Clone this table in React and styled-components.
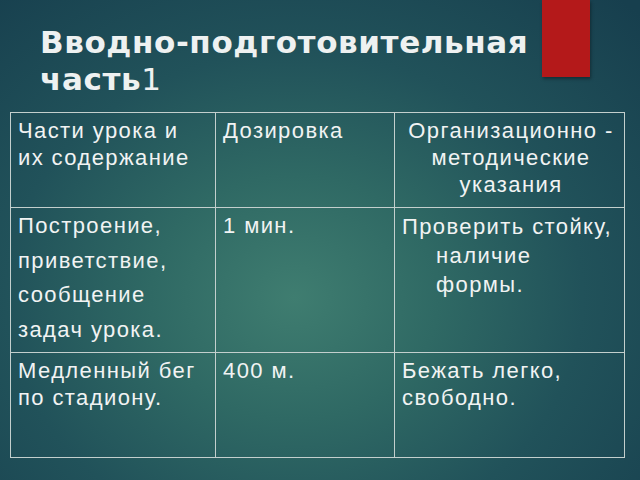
import React from "react";
import styled, { createGlobalStyle } from "styled-components";

const GlobalStyle = createGlobalStyle`
  html, body {
    margin: 0;
    padding: 0;
  }
  body {
    width: 640px;
    height: 480px;
    overflow: hidden;
  }
`;

const Slide = styled.div`
  width: 640px;
  height: 480px;
  box-sizing: border-box;
  background: radial-gradient(
    ellipse 75% 85% at 46% 62%,
    #3f7d70 0%,
    #2f6964 30%,
    #21525a 60%,
    #173f4e 100%
  );
  display: flex;
  flex-direction: column;
`;

const Header = styled.div`
  display: flex;
  align-items: flex-start;
  height: 112px;
`;

const Title = styled.h1`
  margin: 0;
  padding: 24px 0 0 40px;
  font-family: "DejaVu Sans", sans-serif;
  font-size: 31px;
  line-height: 37px;
  letter-spacing: 0.6px;
  font-weight: 700;
  color: #eef1f1;

  span {
    font-weight: 400;
  }
`;

const Accent = styled.div`
  width: 48px;
  height: 77px;
  margin: 0 50px 0 auto;
  background: #b4191a;
  box-shadow: 1px 2px 3px rgba(0, 0, 0, 0.35);
`;

const Table = styled.table`
  margin-left: 10px;
  width: 614px;
  table-layout: fixed;
  border-collapse: collapse;
  font-family: "Liberation Sans", Arial, sans-serif;
  font-size: 22px;
  letter-spacing: 1.4px;
  color: #f1f3f3;
`;

const Row = styled.tr`
  height: ${(p) => p.$h}px;
`;

const Cell = styled.td`
  border: 1.5px solid #c3cfcd;
  vertical-align: top;
  padding: ${(p) => p.$pt ?? 4}px 4px 0 ${(p) => p.$pl ?? 7}px;
  line-height: ${(p) => p.$lh ?? 27}px;
  text-align: ${(p) => (p.$center ? "center" : "left")};
  text-indent: ${(p) => p.$indent ?? 0}px;
`;

export default function App() {
  return (
    <>
      <GlobalStyle />
      <Slide>
        <Header>
          <Title>
            Вводно-подготовительная
            <br />
            часть<span>1</span>
          </Title>
          <Accent />
        </Header>
        <Table>
          <colgroup>
            <col style={{ width: 205 }} />
            <col style={{ width: 179 }} />
            <col style={{ width: 230 }} />
          </colgroup>
          <tbody>
            <Row $h={95}>
              <Cell>
                Части урока и
                <br />
                их содержание
              </Cell>
              <Cell>Дозировка</Cell>
              <Cell $center>
                Организационно -
                <br />
                методические
                <br />
                указания
              </Cell>
            </Row>
            <Row $h={145}>
              <Cell $lh={34.5} $pt={1}>
                Построение,
                <br />
                приветствие,
                <br />
                сообщение
                <br />
                задач урока.
              </Cell>
              <Cell>1 мин.</Cell>
              <Cell $lh={29} $pl={41} $indent={-34}>
                Проверить стойку,
                <br />
                наличие
                <br />
                формы.
              </Cell>
            </Row>
            <Row $h={105}>
              <Cell>
                Медленный бег
                <br />
                по стадиону.
              </Cell>
              <Cell>400 м.</Cell>
              <Cell>
                Бежать легко,
                <br />
                свободно.
              </Cell>
            </Row>
          </tbody>
        </Table>
      </Slide>
    </>
  );
}
